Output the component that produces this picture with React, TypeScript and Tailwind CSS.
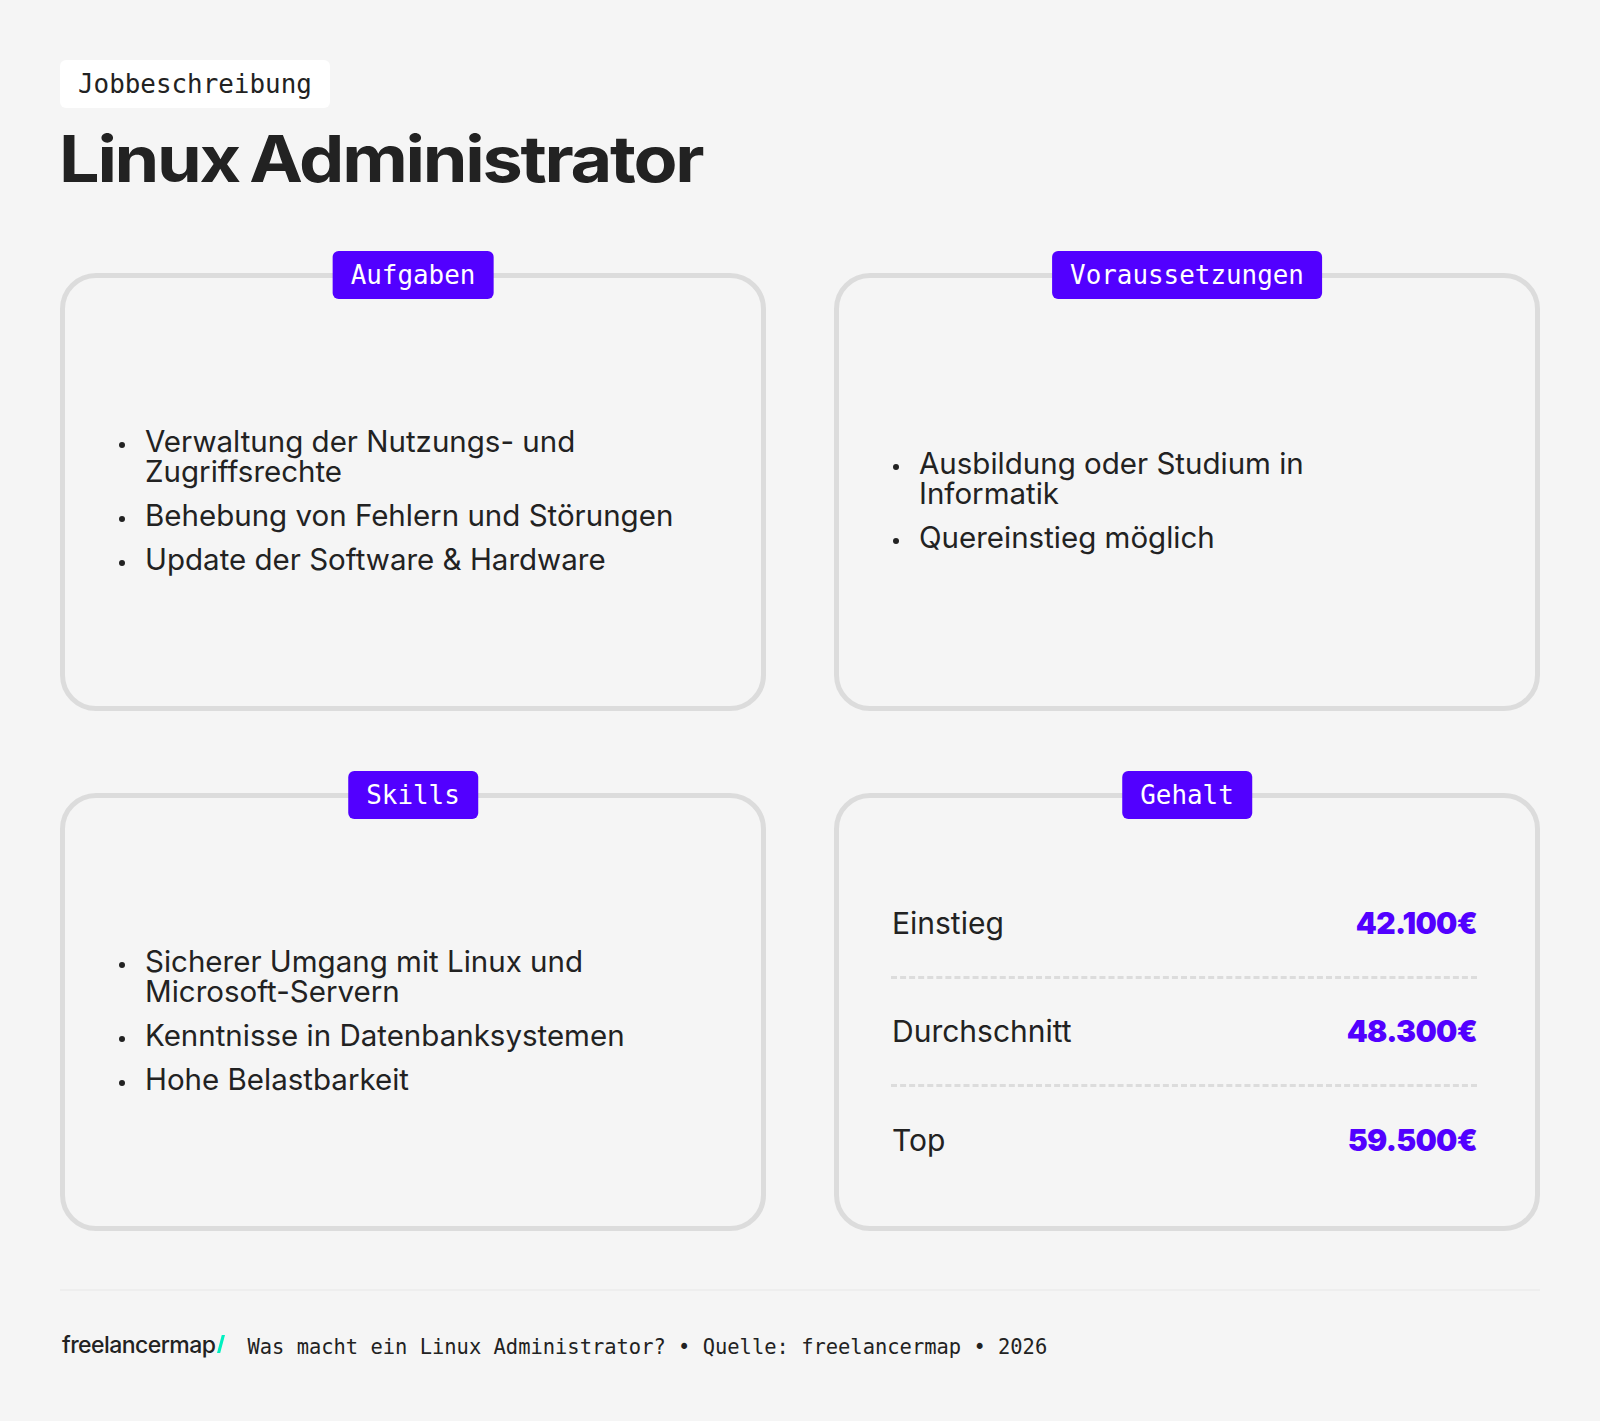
const sans = "font-['Inter','Noto_Sans',sans-serif]"
const mono = "font-['DejaVu_Sans_Mono',monospace]"

function Card({ title, children }: { title: string; children: React.ReactNode }) {
    return (
        <section className="relative h-[438px] rounded-[36px] border-[5px] border-[#dcdcdc] flex flex-col justify-center px-[51px]">
            <span className={`absolute -top-[27px] left-1/2 -translate-x-1/2 h-[48px] px-[18px] rounded-[6px] bg-[#5200ff] text-white text-[25.9px] leading-[48px] whitespace-nowrap ${mono}`}>
                {title}
            </span>
            {children}
        </section>
    )
}

function Bullets({ items }: { items: string[] }) {
    return (
        <ul className={`mt-[16px] pl-[29px] pr-[32px] space-y-[14px] text-[29.5px] leading-[30px] text-[#222222] ${sans}`}>
            {items.map(item => (
                <li key={item} className="relative before:absolute before:-left-[26px] before:top-[16px] before:size-[6px] before:rounded-full before:bg-[#222222]">
                    {item}
                </li>
            ))}
        </ul>
    )
}

const salaries = [
    { label: 'Einstieg', value: '42.100€' },
    { label: 'Durchschnitt', value: '48.300€' },
    { label: 'Top', value: '59.500€' },
]

export default function App() {
    return (
        <main className="min-h-screen overflow-hidden bg-[#f5f5f5] px-[60px] pt-[60px] text-[#222222]">
            {/* Header */}
            <div className={`inline-block h-[48px] px-[18px] rounded-[6px] bg-white text-[25.9px] leading-[48px] ${mono}`}>
                Jobbeschreibung
            </div>
            <h1 className={`mt-[14px] -ml-[1px] w-fit origin-left scale-x-[1.123] text-[64px] leading-[74px] font-bold tracking-[-2px] [word-spacing:-4px] ${sans}`}>Linux Administrator</h1>

            {/* Cards */}
            <div className="mt-[77px] grid grid-cols-2 gap-x-[68px] gap-y-[82px]">
                <Card title="Aufgaben">
                    <Bullets items={['Verwaltung der Nutzungs- und Zugriffsrechte', 'Behebung von Fehlern und Störungen', 'Update der Software & Hardware']} />
                </Card>
                <Card title="Voraussetzungen">
                    <Bullets items={['Ausbildung oder Studium in Informatik', 'Quereinstieg möglich']} />
                </Card>
                <Card title="Skills">
                    <Bullets items={['Sicherer Umgang mit Linux und Microsoft-Servern', 'Kenntnisse in Datenbanksystemen', 'Hohe Belastbarkeit']} />
                </Card>
                <Card title="Gehalt">
                    <div className={`mt-[41px] ml-[1px] mr-[7px] divide-y-[3px] divide-dashed divide-[#dcdcdc] ${sans}`}>
                        {salaries.map(row => (
                            <div key={row.label} className="flex items-center justify-between h-[108px] pl-[1px] text-[30px]">
                                <span>{row.label}</span>
                                <span className="font-black tracking-[-0.7px] text-[#5200ff]">{row.value}</span>
                            </div>
                        ))}
                    </div>
                </Card>
            </div>

            {/* Footer */}
            <footer className="mt-[58px] border-t-2 border-[#eeeeee] pt-[41px] flex items-center gap-[23px]">
                <span className={`-mt-[4px] ml-[2px] flex items-end gap-[2px] text-[23px] leading-[30px] font-medium tracking-[-0.55px] ${sans}`}>
                    freelancermap
                    <svg width="8" height="18" viewBox="0 0 8 18" className="mb-[7px]">
                        <polygon points="4.8,0 8,0 3.2,18 0,18" fill="#00f0c0" />
                    </svg>
                </span>
                <span className={`-ml-[1px] text-[20.45px] leading-[30px] ${mono}`}>
                    Was macht ein Linux Administrator? • Quelle: freelancermap • 2026
                </span>
            </footer>
        </main>
    )
}
